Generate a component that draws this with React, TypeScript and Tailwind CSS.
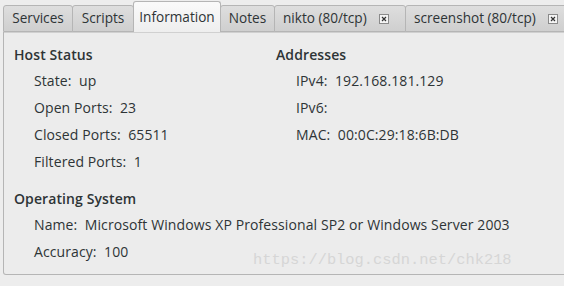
import type { ReactNode } from "react";

const font = { fontFamily: '"Open Sans", "DejaVu Sans", sans-serif' };

function CloseBox() {
  return (
    <span className="ml-[12px] inline-flex h-[10px] w-[10px] items-center justify-center border border-[#8a8a8a] bg-[#f4f4f4]">
      <svg width="6" height="6" viewBox="0 0 6 6">
        <path d="M1 1 L5 5 M5 1 L1 5" stroke="#333" strokeWidth="1.2" />
      </svg>
    </span>
  );
}

function Tab({ label, active, closable, w }: { label: string; active?: boolean; closable?: boolean; w: string }) {
  const align = closable ? "justify-start pl-[8px]" : "justify-center";
  return (
    <div
      className={
        active
          ? `${w} ${align} -ml-px flex h-[31px] shrink-0 items-center rounded-t-[3px] border border-b-0 border-[#b5b5b5] bg-gradient-to-b from-[#fafafa] to-[#eeeeee] text-[#2e3436]`
          : `${w} ${align} -ml-px mt-[4px] flex h-[27px] shrink-0 items-center rounded-t-[3px] border border-[#b5b5b5] bg-gradient-to-b from-[#dedede] to-[#cfcfcf] text-[#2e3436]`
      }
    >
      <span>{label}</span>
      {closable && <CloseBox />}
    </div>
  );
}

function Row({ children }: { children: ReactNode }) {
  return <div className="flex h-[27px] items-center pl-[20px] whitespace-pre">{children}</div>;
}

export default function App() {
  return (
    <div
      className="h-[286px] w-[564px] overflow-hidden bg-[#ededed] text-[14px] tracking-[0.1px] text-[#2e3436]"
      style={font}
    >
      <div className="flex pl-[4px] pt-[1px] text-[13.6px] tracking-normal">
        <Tab w="w-[70px]" label="Services" />
        <Tab w="w-[62px]" label="Scripts" />
        <Tab w="w-[88px]" label="Information" active />
        <Tab w="w-[55px]" label="Notes" />
        <Tab w="w-[132px]" label="nikto (80/tcp)" closable />
        <Tab w="w-[170px]" label="screenshot (80/tcp)" closable />
      </div>
      <div className="relative ml-[3px] h-[243px] w-[580px] rounded-b-[3px] border border-t-0 border-[#b5b5b5] bg-[#ececec] pt-[8px]">
        <div className="-mt-[8px] mb-[8px] h-px w-full bg-[#d0d0d0]" />
        <div className="flex">
          <div className="w-[272px] pl-[10px]">
            <div className="flex h-[26px] items-center font-semibold">Host Status</div>
            <Row>State:  up</Row>
            <Row>Open Ports:  23</Row>
            <Row>Closed Ports:  65511</Row>
            <Row>Filtered Ports:  1</Row>
          </div>
          <div>
            <div className="flex h-[26px] items-center font-semibold">Addresses</div>
            <Row>IPv4:  192.168.181.129</Row>
            <Row>IPv6:</Row>
            <Row>MAC:  00:0C:29:18:6B:DB</Row>
          </div>
        </div>
        <div className="mt-[10px] pl-[10px]">
          <div className="flex h-[26px] items-center font-semibold">Operating System</div>
          <Row>Name:  Microsoft Windows XP Professional SP2 or Windows Server 2003</Row>
          <Row>Accuracy:  100</Row>
        </div>
        <div
          className="absolute left-[249px] top-[217px] text-[15.4px] tracking-[0px] text-[#d6d6d6]"
          style={{ fontFamily: '"Liberation Mono", monospace' }}
        >
          https://blog.csdn.net/chk218
        </div>
      </div>
    </div>
  );
}
